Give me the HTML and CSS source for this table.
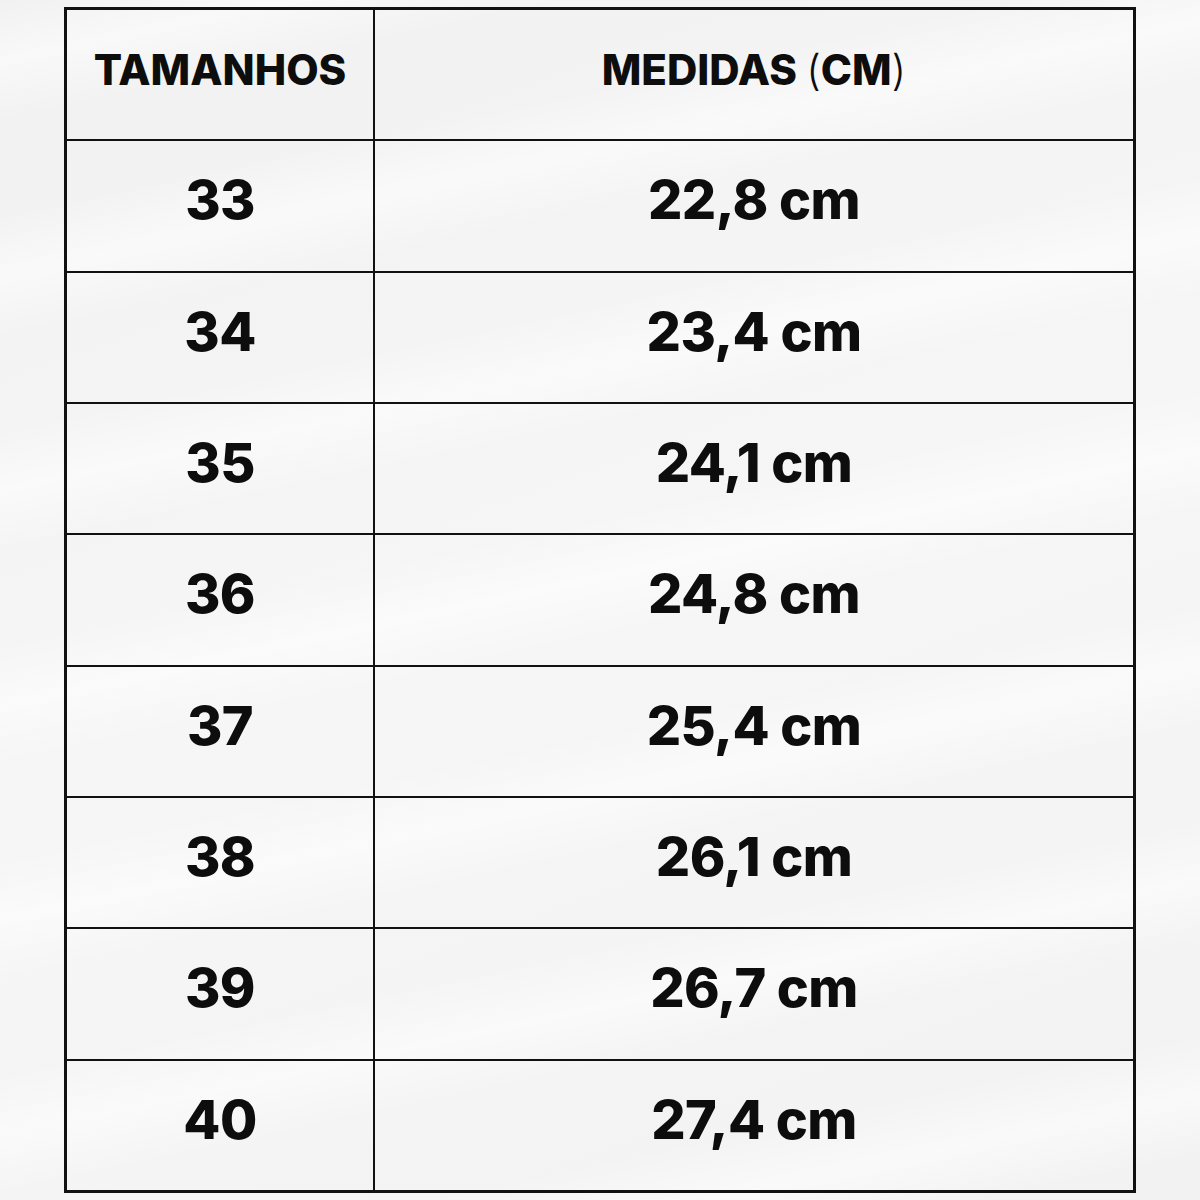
FILE: index.html
```html
<!DOCTYPE html>
<html lang="pt">
<head>
<meta charset="utf-8">
<title>Tabela de medidas</title>
<link rel="stylesheet" href="styles.css">
</head>
<body>
<main class="page">
  <div class="size-table">
    <div class="cell head"><span>TAMANHOS</span></div>
    <div class="cell head"><span>MEDIDAS <span class="paren">(</span>CM<span class="paren">)</span></span></div>
    <div class="cell"><span>33</span></div><div class="cell"><span>22,8 cm</span></div>
    <div class="cell"><span>34</span></div><div class="cell"><span>23,4 cm</span></div>
    <div class="cell"><span>35</span></div><div class="cell"><span>24,1 cm</span></div>
    <div class="cell"><span>36</span></div><div class="cell"><span>24,8 cm</span></div>
    <div class="cell"><span>37</span></div><div class="cell"><span>25,4 cm</span></div>
    <div class="cell"><span>38</span></div><div class="cell"><span>26,1 cm</span></div>
    <div class="cell"><span>39</span></div><div class="cell"><span>26,7 cm</span></div>
    <div class="cell"><span>40</span></div><div class="cell"><span>27,4 cm</span></div>
  </div>
</main>
</body>
</html>
```
FILE: styles.css
```css
html, body {
  margin: 0;
  padding: 0;
}

body {
  width: 1200px;
  height: 1200px;
  overflow: hidden;
}

.page,
.cell {
  background-color: #f3f3f3;
  background-image:
    repeating-linear-gradient(168deg,
      rgba(255,255,255,0) 0px,
      rgba(255,255,255,0.55) 60px,
      rgba(255,255,255,0) 120px,
      rgba(255,255,255,0) 210px),
    linear-gradient(160deg, #f1f1f1 0%, #f6f6f6 50%, #f2f2f2 100%);
  background-attachment: fixed;
}

.page {
  box-sizing: border-box;
  width: 1200px;
  height: 1200px;
  padding: 7px 64px 7px 64px;
}

.size-table {
  display: grid;
  grid-template-columns: 306px 758px;
  grid-template-rows: repeat(9, 1fr);
  gap: 2px;
  height: 1180px;
  width: 1066px;
  border: 3px solid #111;
  background: #111;
  font-family: Inter, "Liberation Sans", sans-serif;
  color: #0d0d0d;
}

.cell {
  display: flex;
  align-items: center;
  justify-content: center;
  padding-bottom: 12px;
  box-sizing: border-box;
  font-size: 54px;
  font-weight: 800;
  letter-spacing: -0.6px;
  white-space: pre;
}

.head {
  font-size: 42px;
  font-weight: 800;
  letter-spacing: 0;
  padding-bottom: 10px;
}

.paren {
  font-weight: 300;
}
```
